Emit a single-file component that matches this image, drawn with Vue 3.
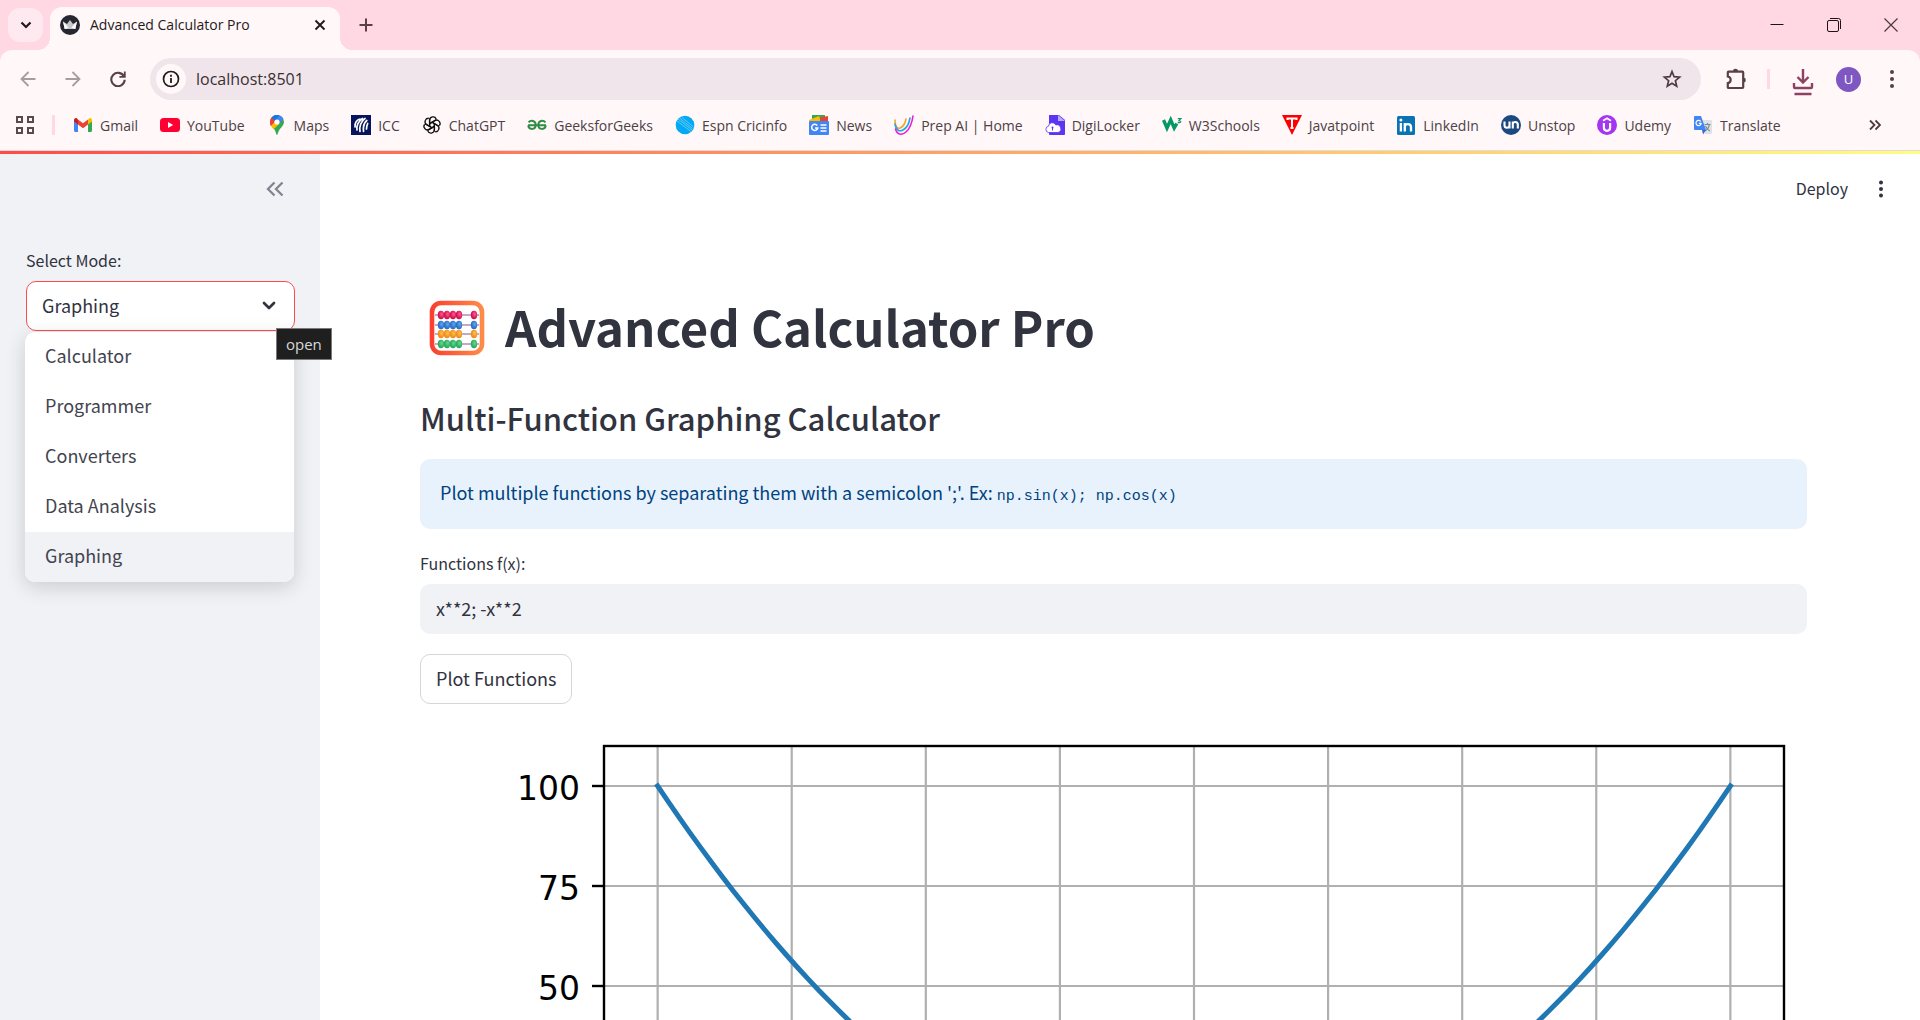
<script setup>
import { ref } from 'vue'

const modes = ['Calculator', 'Programmer', 'Converters', 'Data Analysis', 'Graphing']
const mode = ref('Graphing')
const functions = ref('x**2; -x**2')
const address = ref('localhost:8501')

const bookmarks = [
  { id: 'gmail', label: 'Gmail' },
  { id: 'youtube', label: 'YouTube' },
  { id: 'maps', label: 'Maps' },
  { id: 'icc', label: 'ICC' },
  { id: 'chatgpt', label: 'ChatGPT' },
  { id: 'gfg', label: 'GeeksforGeeks' },
  { id: 'espn', label: 'Espn Cricinfo' },
  { id: 'news', label: 'News' },
  { id: 'prep', label: 'Prep AI | Home' },
  { id: 'digi', label: 'DigiLocker' },
  { id: 'w3', label: 'W3Schools' },
  { id: 'java', label: 'Javatpoint' },
  { id: 'linkedin', label: 'LinkedIn' },
  { id: 'unstop', label: 'Unstop' },
  { id: 'udemy', label: 'Udemy' },
  { id: 'translate', label: 'Translate' }
]

// Plot geometry: the axes box covers x in [-11, 11] and y in [-110, 110].
const box = { left: 184, top: 22, width: 1180, height: 880 }
const px = (x) => box.left + ((x + 11) / 22) * box.width
const py = (y) => box.top + ((110 - y) / 220) * box.height
const xTicks = [-10, -7.5, -5, -2.5, 0, 2.5, 5, 7.5, 10]
const yGrid = [100, 75, 50, 25, 0, -25, -50, -75, -100]
const yTicks = [100, 75, 50]
const curve = (f) => Array.from({ length: 101 }, (_, i) => {
  const x = -10 + i / 5
  return `${px(x).toFixed(1)},${py(f(x)).toFixed(1)}`
}).join(' ')
const series = [
  { color: '#1f77b4', points: curve((x) => x * x) },
  { color: '#ff7f0e', points: curve((x) => -x * x) }
]

const beadRows = [
  { y: 15, fill: 'url(#beadPink)' },
  { y: 25, fill: 'url(#beadBlue)' },
  { y: 34, fill: 'url(#beadYellow)' },
  { y: 44, fill: 'url(#beadGreen)' }
]
</script>

<template>
  <div class="window">
    <header class="chrome">
      <div class="tabstrip">
        <button class="tab-search" aria-label="Search tabs">
          <svg width="12" height="8" viewBox="0 0 12 8"><path d="M1.500 1.500 6 6l4.500-4.500" fill="none" stroke="#1f1a1c" stroke-width="2.200" /></svg>
        </button>
        <div class="tab">
          <svg class="tab-icon" width="20" height="20" viewBox="0 0 20 20">
            <circle cx="10" cy="10" r="10" fill="#262730" />
            <path d="M3 6.500 7 9l3-4 3 4 4-2.500L15.300 14H4.700Z" fill="#c9c9cc" />
            <path d="M3 6.500 8.500 12.500 5 14h-.3ZM17 6.500 11.500 12.500 15 14h.3Z" fill="#fff" />
          </svg>
          <span class="tab-title">Advanced Calculator Pro</span>
          <button class="plain" aria-label="Close tab">
            <svg width="12" height="12" viewBox="0 0 12 12"><path d="m1.500 1.500 9 9m0-9-9 9" stroke="#1f1a1c" stroke-width="1.900" /></svg>
          </button>
        </div>
        <button class="plain new-tab" aria-label="New tab">
          <svg width="14" height="14" viewBox="0 0 14 14"><path d="M7 .5v13M.5 7h13" stroke="#5b3f47" stroke-width="2" /></svg>
        </button>
        <div class="window-controls">
          <button class="plain" aria-label="Minimize"><svg width="14" height="14" viewBox="0 0 14 14"><path d="M.5 6.500h13" stroke="#1a1416" /></svg></button>
          <button class="plain" aria-label="Restore">
            <svg width="14" height="14" viewBox="0 0 14 14" fill="none" stroke="#1a1416"><rect x=".5" y="2.500" width="11" height="11" rx="1.500" /><path d="M3 .5h8.500a2 2 0 0 1 2 2V11" /></svg>
          </button>
          <button class="plain" aria-label="Close"><svg width="14" height="14" viewBox="0 0 14 14"><path d="m.5.5 13 13m0-13-13 13" stroke="#4a3a40" stroke-width="1.200" /></svg></button>
        </div>
      </div>

      <div class="toolbar">
        <button class="plain nav" aria-label="Back"><svg width="16" height="16" viewBox="0 0 16 16"><path d="M15.500 8H1.500M8.500 1 1.500 8l7 7" fill="none" stroke="#a79ca0" stroke-width="1.800" /></svg></button>
        <button class="plain nav" aria-label="Forward"><svg width="16" height="16" viewBox="0 0 16 16"><path d="M.5 8h14M7.500 1l7 7-7 7" fill="none" stroke="#a79ca0" stroke-width="1.800" /></svg></button>
        <button class="plain nav" aria-label="Reload">
          <svg width="16" height="16" viewBox="0 0 16 16"><path d="M14 5.500A6.700 6.700 0 1 0 14.700 8.800" fill="none" stroke="#5b3f47" stroke-width="2.100" /><path d="M15.700.5v6.300H9.400V4.900h4.500V.5Z" fill="#5b3f47" /></svg>
        </button>
        <div class="omnibox">
          <button class="site-info" aria-label="Site information">
            <svg width="18" height="18" viewBox="0 0 18 18"><circle cx="9" cy="9" r="7.500" fill="none" stroke="#1f1a1c" stroke-width="1.700" /><path d="M9 8v5M9 4.800v1.900" stroke="#1f1a1c" stroke-width="1.800" /></svg>
          </button>
          <input v-model="address" class="address" aria-label="Address" />
          <button class="plain" aria-label="Bookmark this tab">
            <svg width="20" height="20" viewBox="0 0 20 20"><path d="m10 2.600 2.100 5.100 5.500.4-4.200 3.600 1.300 5.400L10 14.200l-4.700 2.900 1.300-5.400L2.400 8.100l5.500-.4Z" fill="none" stroke="#4d3b41" stroke-width="1.700" /></svg>
          </button>
        </div>
        <button class="plain ext" aria-label="Extensions">
          <svg width="22" height="22" viewBox="0 0 22 22"><path d="M3.500 3.700h14a.7.7 0 0 1 .7.7v14.900a.7.7 0 0 1-.7.7h-14a.7.7 0 0 1-.7-.7v-4.100c3.800-.6 3.800-6.100 0-6.700V4.400a.7.7 0 0 1 .7-.7Z" fill="none" stroke="#5b3f47" stroke-width="2.200" /><path d="M8 3a2.500 2.300 0 0 1 5 0ZM18.500 9.400a2.300 2.500 0 0 1 0 5Z" fill="#5b3f47" /></svg>
        </button>
        <span class="divider"></span>
        <button class="plain dl" aria-label="Downloads">
          <svg width="22" height="28" viewBox="0 0 22 28" fill="none" stroke="#8e4263" stroke-width="2.400"><path d="M11 1v13M5.500 9l5.500 5.500L16.500 9M2 15v4a1 1 0 0 0 1 1h16a1 1 0 0 0 1-1v-4M2.500 26h17" /></svg>
        </button>
        <button class="avatar" aria-label="Profile">U</button>
        <button class="plain" aria-label="Menu">
          <svg width="20" height="20" viewBox="0 0 20 20" fill="#5b3f47"><circle cx="10" cy="3" r="2" /><circle cx="10" cy="10" r="2" /><circle cx="10" cy="17" r="2" /></svg>
        </button>
      </div>

      <nav class="bookmarks">
        <button class="plain apps" aria-label="Tab groups">
          <svg width="18" height="18" viewBox="0 0 18 18" fill="none" stroke="#5a4a50" stroke-width="2"><path d="M1 1h5v5H1ZM12 1h5v5h-5ZM1 12h5v5H1ZM12 12h5v5h-5Z" /></svg>
        </button>
        <span class="divider"></span>
        <a v-for="b in bookmarks" :key="b.id" class="bookmark" href="#">
          <svg width="20" height="20" viewBox="0 0 20 20">
            <g v-if="b.id === 'gmail'">
              <path d="M1 5v10.500c0 .8.600 1.500 1.400 1.500H5V8.500Z" fill="#4285f4" />
              <path d="M19 5v10.500c0 .8-.6 1.500-1.400 1.500H15V8.500Z" fill="#34a853" />
              <path d="M15 4.500v5l4-3V5c0-2-2-2.500-3-1.600Z" fill="#fbbc04" />
              <path d="M5 9.500v-5l5 3.800 5-3.800v5l-5 3.800Z" fill="#ea4335" />
              <path d="M1 5v1.500l4 3v-5L4 3.400C3 2.500 1 3 1 5Z" fill="#c5221f" />
            </g>
            <g v-else-if="b.id === 'youtube'">
              <rect y="3" width="20" height="14" rx="3.500" fill="#ff0033" /><path d="m8 7 5.200 3L8 13Z" fill="#fff" />
            </g>
            <g v-else-if="b.id === 'maps'">
              <path d="M10 20c-.8 0-.9-3.500-3-6C5 11.500 3 9.500 3 7a7 7 0 0 1 14 0c0 2.500-2 4.500-4 7-2.100 2.500-2.200 6-3 6Z" fill="#34a853" />
              <path d="M3.900 10.500 8.500 5l3.500 4-5.300 5.300C5.500 12.700 4.300 11.600 3.900 10.500Z" fill="#fbbc04" />
              <path d="M4.500 2.600 8.500 6l-4.600 5C3 9.500 3 8.300 3 7c0-1.700.6-3.300 1.500-4.400Z" fill="#ea4335" />
              <path d="M4.500 2.600A7 7 0 0 1 12.500.4L8 6Z" fill="#1a73e8" />
              <path d="M12.500.4c1.800.6 3.100 1.800 3.900 3.500L12 9 9 5Z" fill="#4285f4" />
              <circle cx="10" cy="7" r="2.600" fill="#fff" />
            </g>
            <g v-else-if="b.id === 'icc'">
              <rect width="20" height="20" fill="#06155c" />
              <g fill="none" stroke="#fff" stroke-linecap="round" stroke-width="1.700"><path d="M4 12c-.5-4 2-7.500 5-8M6 15c-.8-4 1.500-9 5.500-11.500M9 16.500C8 12 10 6 14 3.500M12.500 16.300C12 12 13.500 7.500 15.800 5.500M15.500 14c0-2 .5-4 1.200-5.500" /></g>
            </g>
            <g v-else-if="b.id === 'chatgpt'" fill="none" stroke="#111" stroke-width="1.300">
              <path v-for="n in 6" :key="n" :transform="`rotate(${n * 60} 10 10)`" d="M10 12.700 7.600 11.300V5.400c0-4 5.300-4.700 6.600-1.500M9.900 7.300l4.600-2.700" />
            </g>
            <g v-else-if="b.id === 'gfg'" fill="none" stroke="#2f8d46" stroke-width="2">
              <path d="M1 10.200h18M1.600 7.400C4 4.500 8.700 5.800 8.700 10c0 5-7 5.200-7.400.4M18.400 7.400C16 4.500 11.300 5.800 11.300 10c0 5 7 5.200 7.400.4" />
            </g>
            <g v-else-if="b.id === 'espn'">
              <circle cx="10" cy="10" r="9.300" fill="#03a9f4" /><path d="m3 4 14 11M4.500 3l13 10.500M2 6l14 10.500M7 2.500l11 9" stroke="#9fdcf8" stroke-width=".6" />
            </g>
            <g v-else-if="b.id === 'news'">
              <path d="M3 0h13v5H3Z" fill="#34a853" /><path d="m0 5 10-4 2 5H0Z" fill="#fbbc04" /><path d="M11 2.500 19 1v6h-8Z" fill="#ea4335" />
              <rect y="6" width="20" height="14" rx="1" fill="#4285f4" />
              <path d="M8.300 10.600A3.100 3.100 0 1 0 8.800 13H6M11.500 10h6M11.500 13h6M11.500 16h6" fill="none" stroke="#fff" stroke-width="1.500" />
            </g>
            <g v-else-if="b.id === 'prep'" fill="none" stroke-linecap="round">
              <path d="M1 5c0 6 2 9 5 8s5-4 6-9" stroke="#f5a623" stroke-width="1.600" />
              <path d="M1 9c1 6 4 8 8 6s6-6 7-12" stroke="#1fa7e8" stroke-width="1.600" />
              <path d="M1.500 14C3 20 8 20.500 12 17s6-9 7-16" stroke="#e81fd8" stroke-width="1.600" />
            </g>
            <g v-else-if="b.id === 'digi'">
              <path d="M4 0h10l6 5v14a1 1 0 0 1-1 1H5a1 1 0 0 1-1-1Z" fill="#5b35f0" /><path d="m13 0 7 6h-7Z" fill="#b9a9fb" />
              <path d="M3.500 17.500a3.200 3.200 0 0 1 0-6.300A3.800 3.800 0 0 1 10.800 10a3.800 3.800 0 0 1 2.200 7.500Z" fill="#fff" stroke="#5b35f0" stroke-width=".8" /><circle cx="7.500" cy="12.500" r="1" fill="#5b35f0" /><path d="M7.500 12.500v3" stroke="#5b35f0" />
            </g>
            <g v-else-if="b.id === 'w3'" fill="none" stroke="#059862">
              <path d="M1.500 5 5 13l3.700-8 3.500 8 2.600-4.500" stroke-width="3.400" /><path d="M15.800 3.700h3L17 5.700c2.500 0 2.300 2.600-1.300 1.800" stroke-width="1.200" />
            </g>
            <g v-else-if="b.id === 'java'">
              <path d="M0 0h20L10 20Z" fill="#f00" /><path d="M5.500 5V3.500h9V5M10 3.500V13M8.500 13h3" fill="none" stroke="#fff" stroke-width="2" />
            </g>
            <g v-else-if="b.id === 'linkedin'">
              <rect x="1" y="1" width="18" height="19" rx="1.500" fill="#0a73b5" /><circle cx="4.900" cy="5" r="1.500" fill="#fff" />
              <path d="M4.900 8v8.500M8.800 16.500V8M8.800 11.500c.5-3 6-3.500 6.200.5v4.500" fill="none" stroke="#fff" stroke-width="2.300" />
            </g>
            <g v-else-if="b.id === 'unstop'">
              <circle cx="10" cy="10" r="10" fill="#1c4980" />
              <path d="M3.500 6.500v3.700c0 3.300 5 3.300 5 0V6.500M8.500 13.500V6.500M11.800 13.500V6.500M11.800 9.500c0-3.500 5-3.200 5 0v4" fill="none" stroke="#fff" stroke-width="2.100" />
            </g>
            <g v-else-if="b.id === 'udemy'">
              <circle cx="10" cy="10" r="10" fill="#a435f0" /><path d="m6 5.700 4-2.400 4 2.400" fill="none" stroke="#fff" stroke-width="1.800" /><path d="M6.900 8v4.800c0 4 6.200 4 6.200 0V8" fill="none" stroke="#fff" stroke-width="2.200" />
            </g>
            <g v-else>
              <path d="M8 5h10a1 1 0 0 1 1 1v12a1 1 0 0 1-1 1h-6Z" fill="#dfe3e6" /><path d="M11.500 9.500h6M14.500 8v1.500M12 16c2.500-1.500 4-3.500 4.300-6.500M12.500 11c.8 2 2.500 4 4.500 5" fill="none" stroke="#7c8b93" stroke-width="1.200" />
              <path d="m9 15 4 0-3 4.500Z" fill="#3367d6" /><path d="M2 1h6l5 14H2a1 1 0 0 1-1-1V2a1 1 0 0 1 1-1Z" fill="#4285f4" />
              <path d="M7.700 6.500A2.600 2.600 0 1 0 8.200 8.300H5.800" fill="none" stroke="#fff" stroke-width="1.200" />
            </g>
          </svg>
          <span>{{ b.label }}</span>
        </a>
        <button class="plain more" aria-label="More bookmarks">
          <svg width="12" height="12" viewBox="0 0 12 12"><path d="m1 1.500 4.500 4.500L1 10.500M6.500 1.500 11 6l-4.500 4.500" fill="none" stroke="#4d3b41" stroke-width="1.800" /></svg>
        </button>
      </nav>
    </header>

    <div class="accent"></div>

    <div class="app">
      <aside class="sidebar">
        <button class="plain collapse" aria-label="Collapse sidebar">
          <svg width="18" height="16" viewBox="0 0 18 16"><path d="M8.500 1.500 2 8l6.500 6.500M16.500 1.500 10 8l6.500 6.500" fill="none" stroke="#808590" stroke-width="2.300" /></svg>
        </button>
        <label class="field-label" for="mode">Select Mode:</label>
        <div class="select-wrap">
          <select id="mode" v-model="mode" class="select">
            <option v-for="m in modes" :key="m">{{ m }}</option>
          </select>
          <svg class="chevron" width="14" height="9" viewBox="0 0 14 9"><path d="m2 2 5 5 5-5" fill="none" stroke="#31333f" stroke-width="2.700" stroke-linecap="round" stroke-linejoin="round" /></svg>
          <ul class="menu" role="listbox" aria-label="Select Mode">
            <li v-for="m in modes" :key="m" role="option" :aria-selected="m === mode" :class="{ active: m === mode }" @click="mode = m">{{ m }}</li>
          </ul>
          <div class="tooltip" role="tooltip">open</div>
        </div>
      </aside>

      <main class="main">
        <div class="app-bar">
          <button class="plain deploy">Deploy</button>
          <button class="plain" aria-label="Main menu">
            <svg width="20" height="20" viewBox="0 0 20 20" fill="#31333f"><circle cx="10" cy="3.500" r="2" /><circle cx="10" cy="10" r="2" /><circle cx="10" cy="16.500" r="2" /></svg>
          </button>
        </div>
        <div class="content">
          <h1>
            <svg class="abacus" width="56" height="56" viewBox="0 0 56 56" aria-hidden="true">
              <defs>
                <linearGradient id="frame" x1="0" x2="1"><stop offset="0" stop-color="#fb4030" /><stop offset="1" stop-color="#ff8a48" /></linearGradient>
                <radialGradient id="beadPink" cx=".6" cy=".4"><stop offset="0" stop-color="#ff5c92" /><stop offset="1" stop-color="#d5104e" /></radialGradient>
                <radialGradient id="beadBlue" cx=".6" cy=".4"><stop offset="0" stop-color="#5aa9f0" /><stop offset="1" stop-color="#2c6fc4" /></radialGradient>
                <radialGradient id="beadYellow" cx=".6" cy=".4"><stop offset="0" stop-color="#ffc34d" /><stop offset="1" stop-color="#f08c1e" /></radialGradient>
                <radialGradient id="beadGreen" cx=".6" cy=".4"><stop offset="0" stop-color="#5fdc8d" /><stop offset="1" stop-color="#2fa961" /></radialGradient>
              </defs>
              <rect x="3" y="3" width="50" height="50" rx="9" fill="none" stroke="url(#frame)" stroke-width="4.600" />
              <g v-for="row in beadRows" :key="row.y">
                <path :d="`M6 ${row.y}h44`" stroke="#c3a9c9" stroke-width="1.800" />
                <ellipse v-for="x in [12, 18, 24, 30, 45]" :key="x" :cx="x" :cy="row.y" rx="3.200" ry="4.200" :fill="row.fill" />
              </g>
            </svg>
            <span class="title-text">Advanced Calculator Pro</span>
          </h1>
          <h3>Multi-Function Graphing Calculator</h3>
          <div class="alert">Plot multiple functions by separating them with a semicolon ';'. Ex: <code>np.sin(x); np.cos(x)</code></div>
          <label class="field-label" for="functions">Functions f(x):</label>
          <input id="functions" v-model="functions" class="text-input" type="text" />
          <button class="plot">Plot Functions</button>
          <svg class="chart" viewBox="0 0 1387 984" role="img" aria-label="Function plot">
            <g stroke="#b0b0b0" stroke-width="2.200">
              <path v-for="t in xTicks" :key="'x' + t" :d="`M${px(t)} ${box.top}v${box.height}`" />
              <path v-for="t in yGrid" :key="'y' + t" :d="`M${box.left} ${py(t)}h${box.width}`" />
            </g>
            <polyline v-for="s in series" :key="s.color" :points="s.points" :stroke="s.color" fill="none" stroke-width="5" stroke-linecap="square" />
            <rect :x="box.left" :y="box.top" :width="box.width" :height="box.height" fill="none" stroke="#000" stroke-width="2.400" />
            <g v-for="t in yTicks" :key="'l' + t">
              <path :d="`M${box.left - 12} ${py(t)}h12`" stroke="#000" stroke-width="2.400" />
              <text class="tick" :x="box.left - 24" :y="py(t) + 14" text-anchor="end">{{ t }}</text>
            </g>
          </svg>
        </div>
      </main>
    </div>
  </div>
</template>

<style>
html,
body {
  margin: 0;
  overflow: hidden;
}
</style>

<style scoped>
* {
  box-sizing: border-box;
}
.window {
  display: flex;
  flex-direction: column;
  height: 100vh;
  overflow: hidden;
  background: #fff;
  color: #31333f;
  font-family: "Noto Sans CJK SC", "Noto Sans", sans-serif;
}
svg {
  display: block;
  flex: none;
}
button {
  font-family: inherit;
  color: inherit;
}
.plain {
  display: flex;
  padding: 0;
  border: 0;
  background: none;
}
.chrome {
  flex: none;
  background: #ffd8e4;
  border-bottom: 1px solid #e2dadd;
  color: #4d4146;
  font-family: "Open Sans", "Noto Sans", sans-serif;
  font-size: 14px;
}
.tabstrip {
  display: flex;
  align-items: center;
  height: 50px;
  padding: 0 22px 0 8px;
}
.tab-search {
  display: flex;
  align-items: center;
  justify-content: center;
  width: 35px;
  height: 34px;
  padding: 0;
  border: 0;
  border-radius: 12px;
  background: #ffe9f0;
}
.tab {
  position: relative;
  display: flex;
  align-items: center;
  align-self: flex-end;
  gap: 10px;
  width: 290px;
  height: 43px;
  margin-left: 7px;
  padding: 0 14px 8px 10px;
  border-radius: 12px 12px 0 0;
  background: #fff7f8;
  color: #1f1a1c;
}
.tab::before,
.tab::after {
  content: "";
  position: absolute;
  bottom: 0;
  width: 12px;
  height: 12px;
}
.tab::before {
  right: 100%;
  background: radial-gradient(circle at 0 0, transparent 12px, #fff7f8 12px);
}
.tab::after {
  left: 100%;
  background: radial-gradient(circle at 100% 0, transparent 12px, #fff7f8 12px);
}
.tab-title {
  flex: 1;
  white-space: nowrap;
}
.new-tab {
  margin-left: 19px;
}
.window-controls {
  display: flex;
  gap: 43px;
  margin-left: auto;
}
.toolbar {
  display: flex;
  align-items: center;
  height: 58px;
  padding: 0 18px 0 20px;
  border-radius: 12px 12px 0 0;
  background: #fff7f8;
}
.nav {
  margin-right: 29px;
}
.nav:nth-child(3) {
  margin-right: 24px;
}
.omnibox {
  display: flex;
  flex: 1;
  align-items: center;
  height: 42px;
  padding: 0 19px 0 6px;
  border-radius: 21px;
  background: #f0e5ea;
}
.site-info {
  display: flex;
  align-items: center;
  justify-content: center;
  width: 30px;
  height: 30px;
  padding: 0;
  border: 0;
  border-radius: 50%;
  background: #fff7f8;
}
.address {
  flex: 1;
  min-width: 0;
  margin-left: 10px;
  padding: 0;
  border: 0;
  outline: 0;
  background: none;
  color: #3a3034;
  font: inherit;
  font-size: 16px;
}
.ext {
  margin-left: 24px;
}
.divider {
  width: 3px;
  height: 20px;
  background: #ffd8e4;
}
.toolbar .divider {
  margin: 0 22px 0 20px;
}
.dl {
  margin-top: 6px;
}
.avatar {
  width: 25px;
  height: 25px;
  margin: 0 21px 0 22px;
  padding: 0;
  border: 0;
  border-radius: 50%;
  background: #7e57c2;
  color: #fff;
  font-size: 13px;
}
.bookmarks {
  display: flex;
  align-items: center;
  height: 42px;
  padding: 0 39px 8px 16px;
  background: #fff7f8;
}
.apps {
  margin-right: 18px;
}
.bookmark {
  display: flex;
  align-items: center;
  gap: 7px;
  margin-left: 22px;
  color: inherit;
  text-decoration: none;
  white-space: nowrap;
}
.divider + .bookmark {
  margin-left: 18px;
}
.more {
  margin-left: auto;
}
.accent {
  flex: none;
  height: 3px;
  background: linear-gradient(90deg, #ff4b4b, #fffd80);
}
.app {
  display: flex;
  flex: 1;
  min-height: 0;
}
.sidebar {
  z-index: 1;
  width: 320px;
  padding: 0 25px 0 26px;
  background: #f0f2f6;
}
.collapse {
  margin: 27px 11px 0 auto;
}
.field-label {
  display: block;
  font-size: 16px;
  line-height: 24px;
}
.sidebar .field-label {
  margin: 51px 0 9px;
}
.select-wrap {
  position: relative;
}
.select {
  display: block;
  width: 100%;
  height: 50px;
  padding: 0 15px 3px;
  border: 1px solid #ff4b4b;
  border-radius: 10px;
  outline: 0;
  appearance: none;
  background: #fff;
  color: inherit;
  font-family: inherit;
  font-size: 18px;
}
.chevron {
  position: absolute;
  top: 20px;
  right: 19px;
}
.menu {
  position: absolute;
  top: 51px;
  left: -1px;
  width: 100%;
  margin: 0;
  padding: 0;
  border-radius: 10px;
  overflow: hidden;
  background: #fff;
  box-shadow: 0 5px 20px rgba(0, 0, 0, 0.16);
  color: #42444f;
  font-size: 18px;
  list-style: none;
}
.menu li {
  padding: 0 20px 3px;
  line-height: 47px;
}
.menu .active {
  background: #f0f2f6;
}
.tooltip {
  position: absolute;
  top: 47px;
  left: 250px;
  padding: 0 9px;
  border: 1px solid #7a7a7a;
  background: #1f1f1f;
  color: #d8d8d8;
  font-family: "Open Sans", "Noto Sans", sans-serif;
  font-size: 15px;
  line-height: 30px;
}
.main {
  flex: 1;
  min-width: 0;
  overflow: hidden;
}
.app-bar {
  display: flex;
  align-items: center;
  justify-content: flex-end;
  gap: 23px;
  height: 70px;
  padding-right: 29px;
}
.deploy {
  padding-bottom: 2px;
  font-size: 16px;
}
.content {
  padding: 60px 113px 0 100px;
}
h1 {
  display: flex;
  align-items: center;
  gap: 20px;
  height: 88px;
  margin: 0;
  padding-left: 9px;
  font-size: 49px;
  font-weight: 700;
  line-height: 60px;
}
.title-text {
  padding-bottom: 4px;
}
h3 {
  margin: 25px 0 20px;
  font-size: 31px;
  font-weight: 500;
  line-height: 42px;
}
.alert {
  height: 70px;
  padding: 18px 20px 22px;
  border-radius: 10px;
  background: #e8f2fc;
  color: #004280;
  font-size: 18px;
  line-height: 30px;
}
code {
  font-family: "Liberation Mono", monospace;
  font-size: 15px;
  line-height: 15px;
}
.content .field-label {
  margin: 22px 0 9px;
}
.text-input {
  display: block;
  width: 100%;
  height: 50px;
  padding: 0 16px 3px;
  border: 0;
  border-radius: 10px;
  outline: 0;
  background: #f0f2f6;
  color: inherit;
  font-family: inherit;
  font-size: 18px;
}
.plot {
  display: block;
  height: 50px;
  margin: 20px 0;
  padding: 0 15px 3px;
  border: 1px solid #d6d6d9;
  border-radius: 10px;
  background: #fff;
  font-size: 18px;
}
.chart {
  width: 100%;
}
.tick {
  font-family: "DejaVu Sans", sans-serif;
  font-size: 33px;
}
</style>
